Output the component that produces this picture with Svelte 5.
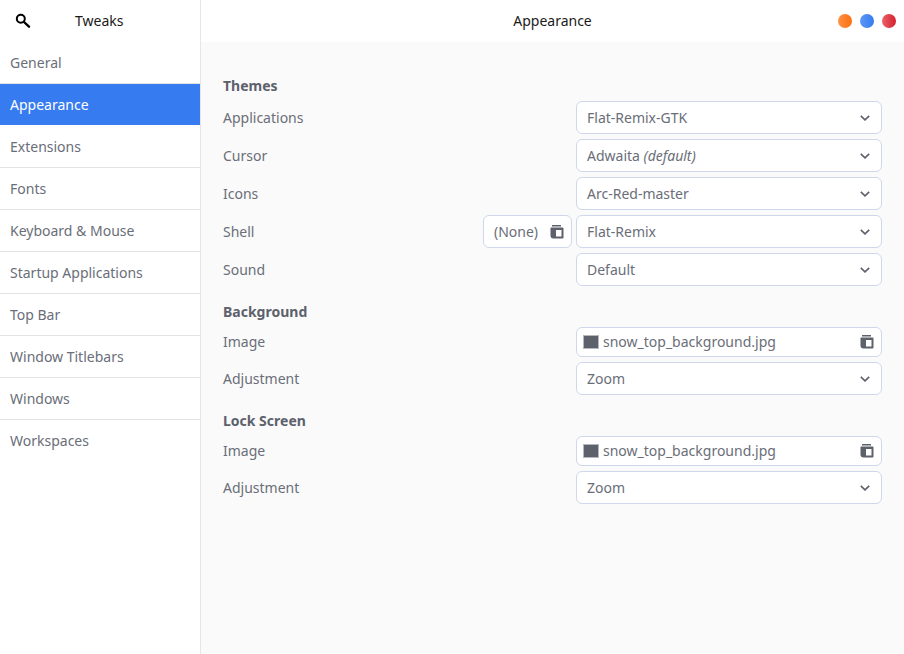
<script>
  const nav = ['General','Appearance','Extensions','Fonts','Keyboard & Mouse','Startup Applications','Top Bar','Window Titlebars','Windows','Workspaces'];
  const sections = [
    { title: 'Themes', rows: [
      { label: 'Applications', value: 'Flat-Remix-GTK' },
      { label: 'Cursor', value: 'Adwaita', em: '(default)' },
      { label: 'Icons', value: 'Arc-Red-master' },
      { label: 'Shell', value: 'Flat-Remix', none: true },
      { label: 'Sound', value: 'Default' }
    ]},
    { title: 'Background', rows: [
      { label: 'Image', file: 'snow_top_background.jpg' },
      { label: 'Adjustment', value: 'Zoom' }
    ]},
    { title: 'Lock Screen', rows: [
      { label: 'Image', file: 'snow_top_background.jpg' },
      { label: 'Adjustment', value: 'Zoom' }
    ]}
  ];
</script>

{#snippet trash()}
  <svg class="trash" width="14" height="14" viewBox="0 0 14 14" aria-hidden="true">
    <path fill="#5c616c" fill-rule="evenodd" d="M2 0h9v1.500h-9z M1 2.500h11.500a1 1 0 0 1 1 1v9a1 1 0 0 1-1 1h-9a3 3 0 0 1-3-3v-7.500a0.500 0.500 0 0 1 0.500-0.500z M6 5v6.500h5.500v-6.500z"/>
  </svg>
{/snippet}

<div class="window">
  <aside class="side">
    <header class="side-head">
      <svg class="search" width="16" height="16" viewBox="0 0 16 16" aria-hidden="true">
        <circle cx="5.800" cy="5.800" r="4" fill="none" stroke="#000" stroke-width="2"/>
        <path d="M9 9l5 4.700" stroke="#000" stroke-width="2.400" stroke-linecap="round"/>
      </svg>
      <span class="side-title">Tweaks</span>
    </header>
    <ul class="nav">
      {#each nav as item}
        <li class:active={item === 'Appearance'}>{item}</li>
      {/each}
    </ul>
  </aside>
  <div class="main">
    <header class="main-head">
      <span class="main-title">Appearance</span>
      <div class="dots">
        <i class="dot orange"></i><i class="dot blue"></i><i class="dot red"></i>
      </div>
    </header>
    <div class="content">
      {#each sections as s}
        <section class="section">
          <h2>{s.title}</h2>
          {#each s.rows as r}
            <div class="row" class:file-row={r.file}>
              <span class="label">{r.label}</span>
              {#if r.none}
                <button class="none">(None){@render trash()}</button>
              {/if}
              {#if r.file}
                <button class="ctl file"><i class="swatch"></i><span class="fname">{r.file}</span>{@render trash()}</button>
              {:else}
                <button class="ctl">
                  <span>{r.value}{#if r.em}&nbsp;<em>{r.em}</em>{/if}</span>
                  <svg class="chev" width="10" height="6" viewBox="0 0 10 6" aria-hidden="true"><path d="M0.800 0.800l4.200 4 4.200-4" fill="none" stroke="#5c616c" stroke-width="1.600"/></svg>
                </button>
              {/if}
            </div>
          {/each}
        </section>
      {/each}
    </div>
  </div>
</div>

<style>
  :global(body) { margin: 0; }
  .window {
    display: flex; width: 904px; height: 654px; overflow: hidden;
    font-family: "Noto Sans", "Open Sans", sans-serif; font-size: 14px; color: #5c616c; background: #fff;
  }
  .side { width: 200px; flex: none; border-right: 1px solid #e6e6e6; background: #fff; }
  .side-head { height: 42px; box-sizing: border-box; padding-bottom: 2px; display: flex; align-items: center; }
  .search { margin: 2px 0 0 15px; }
  .side-title { margin-left: 44px; color: #1a1a1a; }
  .nav { list-style: none; margin: 0; padding: 0; }
  .nav li {
    height: 41px; line-height: 41px; padding-left: 10px; border-bottom: 1px solid #e3e3e3; color: #6a6e78;
  }
  .nav li:last-child { border-bottom: none; }
  .nav li.active { background: #367bf0; color: #fff; border-bottom-color: #fff; }
  .main { flex: 1; min-width: 0; display: flex; flex-direction: column; background: #fafafa; }
  .main-head {
    height: 42px; flex: none; box-sizing: border-box; padding-bottom: 2px; background: #fff; display: flex; align-items: center; justify-content: center; position: relative;
  }
  .main-title { color: #1a1a1a; }
  .dots { position: absolute; right: 8px; top: 14px; display: flex; gap: 8px; }
  .dot { width: 14px; height: 14px; border-radius: 50%; display: block; }
  .orange { background: linear-gradient(90deg, #fd9243, #fd6f0f); }
  .blue { background: linear-gradient(90deg, #5c97f4, #367bf0); }
  .red { background: linear-gradient(90deg, #ea636b, #d41f2b); }
  .content { padding: 33px 22px 0; }
  .section + .section { margin-top: 15px; }
  h2 { margin: 0 0 5px; font-size: 14px; line-height: 21px; font-weight: 700; color: #5c616c; }
  .row { display: flex; align-items: center; height: 33px; margin-bottom: 5px; gap: 4px; }
  .row.file-row { height: 30px; margin-bottom: 5px; }
  .label { margin-right: auto; color: #6a6e78; }
  .file-row .label, .fname { margin-bottom: 2px; }
  button { font: inherit; color: #6a6e78; background: #fff; border: 1px solid #cfd8ea; border-radius: 6px; padding: 0; height: 100%; display: flex; align-items: center; box-sizing: border-box; }
  .none { width: 89px; padding: 0 7px 0 10px; justify-content: space-between; }
  .ctl { width: 306px; padding: 0 11px 0 10px; justify-content: space-between; }
  .ctl.file { padding: 0 7px 0 6px; justify-content: flex-start; }
  .fname { margin-left: 4px; }
  .file .trash { margin-left: auto; }
  .swatch { width: 16px; height: 14px; box-sizing: border-box; background: #5c616c; border: 1px solid #b4b8bf; display: block; }
  .trash, .chev { flex: none; }
</style>
